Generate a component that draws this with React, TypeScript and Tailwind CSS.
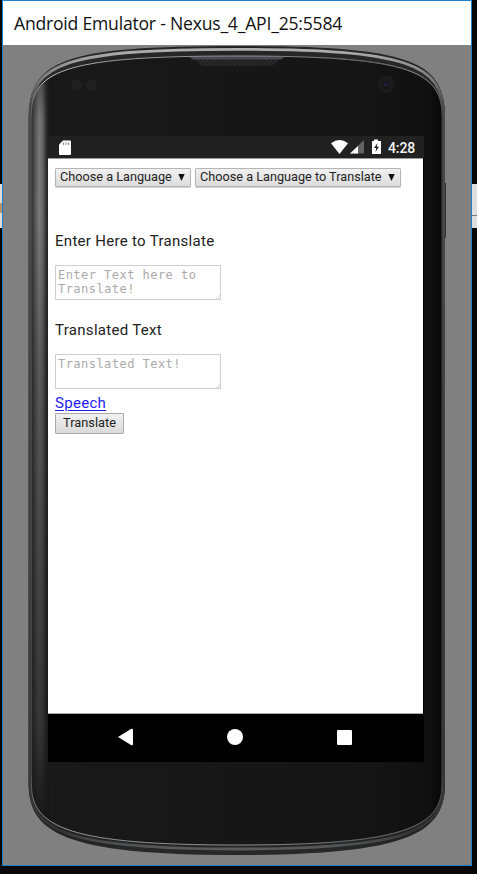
import React from "react";

const OUTER =
  "M28.5 120 C28.5 60 62 46 237 46 C412 46 445 61 445 118 L445 783 C445 832 412 855 237 855 C62 855 28.5 832 28.5 783 Z";
const INNER =
  "M31.5 113 C31.5 69 72 56 237 56 C402 56 442 69 442 115 L442 785 C442 828 402 845 237 845 C72 845 31.5 828 31.5 785 Z";

function PhoneBody() {
  return (
    <svg className="absolute inset-0" width="477" height="874" viewBox="0 0 477 874" aria-hidden="true">
      <defs>
        <linearGradient id="rim" x1="0" y1="46" x2="0" y2="855" gradientUnits="userSpaceOnUse">
          <stop offset="0" stopColor="#252525" />
          <stop offset="0.07" stopColor="#2b2b2b" />
          <stop offset="0.95" stopColor="#1c1c1c" />
          <stop offset="1" stopColor="#292929" />
        </linearGradient>
        <linearGradient id="edge" x1="0" y1="46" x2="0" y2="855" gradientUnits="userSpaceOnUse">
          <stop offset="0" stopColor="#b5b5b5" />
          <stop offset="0.03" stopColor="#8a8a8a" />
          <stop offset="0.07" stopColor="#4c4c4c" />
          <stop offset="0.9" stopColor="#383838" />
          <stop offset="0.97" stopColor="#333" />
          <stop offset="1" stopColor="#66686a" />
        </linearGradient>
        <linearGradient id="shine" x1="0" y1="46" x2="0" y2="855" gradientUnits="userSpaceOnUse">
          <stop offset="0" stopColor="#74777b" />
          <stop offset="0.04" stopColor="#c5c5c5" />
          <stop offset="0.09" stopColor="#454545" />
          <stop offset="0.9" stopColor="#454545" />
          <stop offset="0.96" stopColor="#999" />
          <stop offset="1" stopColor="#888" />
        </linearGradient>
        <linearGradient id="shade" x1="237" y1="0" x2="445" y2="0" gradientUnits="userSpaceOnUse">
          <stop offset="0" stopColor="#222" stopOpacity="0" />
          <stop offset="0.6" stopColor="#222" stopOpacity="0.4" />
          <stop offset="1" stopColor="#222" stopOpacity="0.4" />
        </linearGradient>
        <linearGradient id="bevel" x1="31" y1="0" x2="50" y2="0" gradientUnits="userSpaceOnUse">
          <stop offset="0" stopColor="#2b2b2b" />
          <stop offset="0.2" stopColor="#555" />
          <stop offset="0.42" stopColor="#808080" />
          <stop offset="0.6" stopColor="#707070" />
          <stop offset="0.8" stopColor="#303030" />
          <stop offset="1" stopColor="#171717" />
        </linearGradient>
        <linearGradient id="fade" x1="0" y1="65" x2="0" y2="820" gradientUnits="userSpaceOnUse">
          <stop offset="0" stopColor="#171717" stopOpacity="0.6" />
          <stop offset="0.07" stopColor="#171717" stopOpacity="0.1" />
          <stop offset="0.2" stopColor="#171717" stopOpacity="0.05" />
          <stop offset="0.4" stopColor="#171717" stopOpacity="0.35" />
          <stop offset="0.88" stopColor="#171717" stopOpacity="0.7" />
          <stop offset="1" stopColor="#171717" />
        </linearGradient>
        <linearGradient id="face" x1="28" y1="0" x2="445" y2="0" gradientUnits="userSpaceOnUse">
          <stop offset="0" stopColor="#191919" />
          <stop offset="0.8" stopColor="#151515" />
          <stop offset="0.96" stopColor="#101010" />
          <stop offset="1" stopColor="#050505" />
        </linearGradient>
        <pattern id="mesh" width="4" height="4" patternUnits="userSpaceOnUse">
          <rect width="4" height="4" fill="#292929" />
          <circle cx="1" cy="1" r="0.8" fill="#131313" />
          <circle cx="3" cy="3" r="0.8" fill="#131313" />
        </pattern>
        <clipPath id="glass"><path d={INNER} /></clipPath>
      </defs>
      <path d={OUTER} fill="url(#rim)" />
      <path
        d="M30.2 115 C30.2 63 67 49.3 237 49.3 C407 49.3 443.5 64 443.5 115 L443.5 785 C443.5 831 407 849 237 849 C67 849 30.2 831 30.2 785 Z"
        fill="none" stroke="url(#edge)" strokeWidth="2.8"
      />
      <path d={INNER} fill="url(#face)" />
      <g clipPath="url(#glass)">
        <rect x="31" y="56" width="19" height="790" fill="url(#bevel)" />
        <rect x="31" y="56" width="19" height="790" fill="url(#fade)" />
        <path d="M188 55 H286 Q282 57 278 61 Q275 66 269 66 H205 Q199 66 196 61 Q193 57 188 56Z" fill="url(#mesh)" />
        <path d="M188 56 H286 L281 59.5 H193Z" fill="#474b50" />
      </g>
      <path d={INNER} fill="none" stroke="url(#shine)" strokeWidth="1" />
      <path d={INNER} fill="none" stroke="url(#shade)" strokeWidth="1.2" />
      <path d="M445.5 183V238" stroke="#333" strokeWidth="1" />
      <circle cx="76.5" cy="85" r="5.5" fill="#202020" />
      <circle cx="91" cy="85" r="5.5" fill="#202020" />
      <circle cx="386" cy="84.5" r="9" fill="#1b1b1b" />
      <circle cx="386" cy="84.5" r="4" fill="#171721" />
      <circle cx="385.5" cy="84.5" r="1.5" fill="#23234a" />
    </svg>
  );
}

function StatusBar() {
  return (
    <div className="flex h-[22px] w-[376px] shrink-0 items-center bg-[#212121] pl-[11px] pr-[9px] text-white">
      <svg width="12" height="15" viewBox="0 0 12 15">
        <path d="M4 .5H11Q12 .5 12 1.5V14Q12 15 11 15H1Q0 15 0 14V4.500Z" fill="#fff" />
        <path d="M4.500 2.200V5M7 2.200V5M9.500 2.200V5" stroke="#999" strokeWidth="1.200" />
      </svg>
      <div className="ml-auto flex items-center">
        <svg width="51" height="16" viewBox="0 0 51 16">
          <path d="M0 4.200Q8.500-2 17 4.200L8.500 15Z" fill="#fff" />
          <path d="M33 1V14.500H19Z" fill="#646464" />
          <path d="M27 7V14.500H19Z" fill="#fff" />
          <path d="M43 .5H47V2H50V15H41V2H43Z" fill="#fff" />
          <path d="M46.500 4L43 9H45.200L44.500 13L48 7.800H45.800Z" fill="#212121" />
        </svg>
        <span className="relative top-px ml-[6px] w-[27px] text-[14px] leading-[22px] font-medium tracking-[-0.1px] whitespace-nowrap text-[#f5f5f5]">4:28</span>
      </div>
    </div>
  );
}

function LanguageSelect({ label, className }: { label: string; className: string }) {
  return (
    <button className={`flex h-[19px] items-center justify-between rounded-[1px] border border-[#b5b5b5] bg-linear-to-b from-[#f1f1f1] to-[#dcdcdc] pr-[5px] pl-[4px] text-[12.7px] leading-[17px] whitespace-nowrap text-[#222] shadow-[0_1px_0_#d0d0d0] ${className}`}>
      <span className="relative top-[-1px]">{label}</span>
      <svg width="7" height="7" viewBox="0 0 7 7"><path d="M.3 0H6.700L3.500 7Z" fill="#111" /></svg>
    </button>
  );
}

function TextBox({ label, children }: { label: string; children: React.ReactNode }) {
  return (
    <div aria-label={label} className="flex h-[35px] w-[166px] items-end justify-between border border-[#cfcfcf] pl-[2px] font-['DejaVu_Sans_Mono',monospace] text-[12px] leading-[14px] tracking-[0.46px] whitespace-nowrap text-[#aaa]">
      <div className="w-[150px] self-start pt-[2px]">{children}</div>
      <svg width="5" height="5" viewBox="0 0 6 6" className="shrink-0"><path d="M1 6L6 1M4 6L6 4" stroke="#bbb" strokeWidth=".8" /></svg>
    </div>
  );
}

function Screen() {
  return (
    <div className="relative mt-[91px] ml-[45px] flex h-[626px] w-[376px] flex-col bg-black font-[Roboto,sans-serif]">
      <StatusBar />
      <main className="h-[556px] w-[375px] border-t border-b border-t-[#999] border-b-[#aaa] bg-white pl-[7px] text-[15px] leading-[18px] text-[#222]">
        <div className="mt-[9px] flex gap-[4px]">
          <LanguageSelect label="Choose a Language" className="w-[136px]" />
          <LanguageSelect label="Choose a Language to Translate" className="w-[206px]" />
        </div>
        <p className="mt-[45px] tracking-[0.3px]">Enter Here to Translate</p>
        <div className="mt-[15px]"><TextBox label="Text">Enter Text here to<br />Translate!</TextBox></div>
        <p className="mt-[21px] tracking-[0.3px]">Translated Text</p>
        <div className="mt-[15px]"><TextBox label="Translated">Translated Text!</TextBox></div>
        <a className="mt-[5px] block w-max tracking-[0.3px] text-[#1c1cee] underline decoration-1 underline-offset-2">Speech</a>
        <button className="mt-px flex h-[21px] w-[69px] justify-center rounded-[1px] border border-[#aaa] bg-linear-to-b from-[#f1f1f1] to-[#dadada] text-[12.8px] leading-[17px] text-[#222]">Translate</button>
      </main>
      <nav className="flex h-[48px] items-center bg-black pb-[2px] pl-[70px]">
        <svg width="15" height="18" viewBox="0 0 15 18"><path d="M0 9L13 1Q15 0 15 2V16Q15 18 13 17Z" fill="#fff" /></svg>
        <div className="ml-[94px] size-[16px] rounded-full bg-white" />
        <div className="ml-[94px] size-[15px] rounded-[1px] bg-white" />
      </nav>
    </div>
  );
}

export default function App() {
  return (
    <div className="relative h-[874px] w-[477px] overflow-hidden bg-[#080808]">
      <div className="absolute top-[184px] left-0 h-[44px] w-[3px] bg-[#ddd]"><div className="mt-[19px] h-[10px] w-[2px] bg-[#b99267]" /></div>
      <div className="absolute top-[184px] right-0 h-[44px] w-[5px] bg-[#dedede] pt-[31px]"><div className="h-px bg-[#777]" /></div>
      <div className="relative ml-[2px] h-[866px] w-[470px] border border-[#1c80cf] bg-[#808080]">
        <header className="flex h-[44px] items-center bg-white pl-[11px] font-['Open_Sans','Noto_Sans',sans-serif] text-[#111]">
          <h1 className="text-[17.6px] leading-[24px] tracking-[-0.22px] whitespace-nowrap">Android Emulator - Nexus_4_API_25:5584</h1>
        </header>
        <div className="absolute top-[-1px] left-[-3px]"><div className="relative h-[874px] w-[477px]"><PhoneBody /></div></div>
        <Screen />
      </div>
    </div>
  );
}
